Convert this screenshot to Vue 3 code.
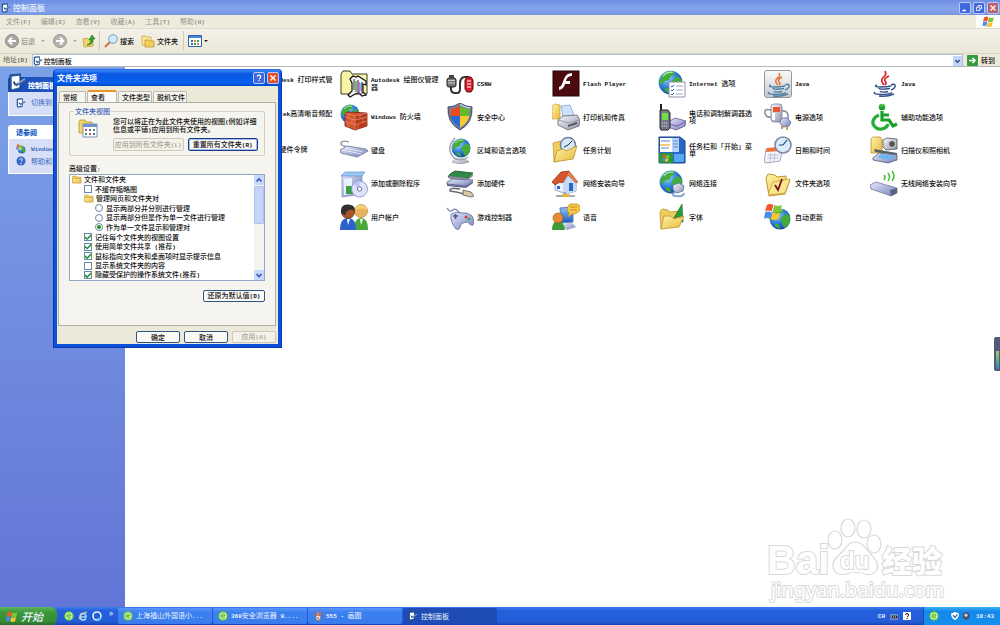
<script setup>
import { h, ref } from 'vue'

// Latin runs are set in a narrower monospace face than the Chinese text around them.
const Txt = (props) =>
  h(
    'span',
    { class: 'txt' },
    props.t.split(/([\x20-\x7e]+)/).filter(Boolean).map((s) => (/^[\x20-\x7e]/.test(s) ? h('span', { class: 'en' }, s) : s)),
  )
Txt.props = ['t']

const menus = ['文件(F)', '编辑(E)', '查看(V)', '收藏(A)', '工具(T)', '帮助(H)']

const rows = [
  [['Autodesk 打印样式管理器', 'plotter'], ['Autodesk 绘图仪管理器', 'plotter'], ['CSNW', 'csnw'], ['Flash Player', 'flash'], ['Internet 选项', 'inet'], ['Java', 'java1'], ['Java', 'java2']],
  [['Realtek高清晰音频配置', 'plotter'], ['Windows 防火墙', 'firewall'], ['安全中心', 'shield'], ['打印机和传真', 'printer'], ['电话和调制解调器选项', 'phone'], ['电源选项', 'power'], ['辅助功能选项', 'access']],
  [['USB 硬件令牌', 'plotter'], ['键盘', 'keyboard'], ['区域和语言选项', 'region'], ['任务计划', 'tasks'], ['任务栏和「开始」菜单', 'taskbar'], ['日期和时间', 'date'], ['扫描仪和照相机', 'scanner']],
  [null, ['添加或删除程序', 'programs'], ['添加硬件', 'hardware'], ['网络安装向导', 'house'], ['网络连接', 'network'], ['文件夹选项', 'folderopt'], ['无线网络安装向导', 'wireless']],
  [null, ['用户帐户', 'users'], ['游戏控制器', 'game'], ['语音', 'speech'], ['字体', 'fonts'], ['自动更新', 'update'], null],
]
const cells = rows.flat()

const tabs = ['常规', '查看', '文件类型', '脱机文件']
const tab = ref(1)

const pairMode = ref('single')
const tree = ref([
  { k: 'folder', l: 0, t: '文件和文件夹' },
  { k: 'check', l: 1, t: '不缓存缩略图', on: false },
  { k: 'folder', l: 1, t: '管理网页和文件夹对' },
  { k: 'radio', l: 2, t: '显示两部分并分别进行管理', v: 'both' },
  { k: 'radio', l: 2, t: '显示两部分但是作为单一文件进行管理', v: 'mixed' },
  { k: 'radio', l: 2, t: '作为单一文件显示和管理对', v: 'single' },
  { k: 'check', l: 1, t: '记住每个文件夹的视图设置', on: true },
  { k: 'check', l: 1, t: '使用简单文件共享 (推荐)', on: true },
  { k: 'check', l: 1, t: '鼠标指向文件夹和桌面项时显示提示信息', on: true },
  { k: 'check', l: 1, t: '显示系统文件夹的内容', on: false },
  { k: 'check', l: 1, t: '隐藏受保护的操作系统文件(推荐)', on: true },
])

const tasks = [
  { t: '上海福山外国语小...', i: 'ball' },
  { t: '360安全浏览器 9....', i: 'ball' },
  { t: '555 - 画图', i: 'paint' },
  { t: '控制面板', i: 'cpl', on: true },
]
const address = ref('控制面板')
</script>

<template>
  <div class="desktop">
    <svg class="sprite" aria-hidden="true">
      <defs>
        <radialGradient id="gSea" cx=".35" cy=".3" r=".8"><stop offset="0" stop-color="#9fd8ff" /><stop offset=".5" stop-color="#2f7fdc" /><stop offset="1" stop-color="#123a94" /></radialGradient>
        <linearGradient id="gFold" x1="0" y1="0" x2="1" y2="1"><stop offset="0" stop-color="#fff3a8" /><stop offset="1" stop-color="#e8b93c" /></linearGradient>
        <linearGradient id="gGrey" x1="0" y1="0" x2="1" y2="1"><stop offset="0" stop-color="#fbfbff" /><stop offset="1" stop-color="#8c92a8" /></linearGradient>
        <linearGradient id="gLav" x1="0" y1="0" x2="1" y2="1"><stop offset="0" stop-color="#e6eafc" /><stop offset="1" stop-color="#7480b8" /></linearGradient>
        <linearGradient id="gBlue" x1="0" y1="0" x2="0" y2="1"><stop offset="0" stop-color="#8cc4fa" /><stop offset="1" stop-color="#1858c0" /></linearGradient>
        <linearGradient id="gGreen" x1="0" y1="0" x2="0" y2="1"><stop offset="0" stop-color="#52d052" /><stop offset="1" stop-color="#0a8a1a" /></linearGradient>
        <linearGradient id="gTile" x1="0" y1="0" x2="0" y2="1"><stop offset="0" stop-color="#fafafa" /><stop offset="1" stop-color="#c3cad2" /></linearGradient>
      </defs>
      <symbol id="globe" viewBox="0 0 20 20">
        <circle cx="10" cy="10" r="9.5" fill="url(#gSea)" />
        <path d="M3 5Q7 0 12 1L13 4 10 5 9 8 5 9 3 12 1 10zM12 8l4-3 3 3v5l-4 5-2-1-1-4-2-2zM5 14l4 1 1 4-4-2z" fill="#45ac38" />
        <path d="M4 5Q7 1 12 2" stroke="#c9f2c0" fill="none" opacity=".8" />
      </symbol>
      <symbol id="fold" viewBox="0 0 20 18">
        <path d="M1 4l1-2h6l2 2h8v12H1z" fill="#efcb56" stroke="#b48a24" stroke-width=".8" />
        <path d="M1 7h17v8l-1 1H2l-1-1z" fill="url(#gFold)" stroke="#b48a24" stroke-width=".8" />
      </symbol>
      <symbol id="flag" viewBox="0 0 20 18">
        <path d="M3 2q3-2 7 0L8 9q-4-2-7 0z" fill="#f0562a" /><path d="M11 2q4 2 8 0l-2 7q-4 2-8 0z" fill="#7cc63a" />
        <path d="M1 10q3-2 7 0l-2 7q-3-2-6 0z" fill="#4a8af4" /><path d="M9 10q4 2 8 0l-2 7q-4 2-8 0z" fill="#fcc430" />
      </symbol>
      <symbol id="cpl" viewBox="0 0 20 20">
        <path d="M2 2l11-1v16l-9 2-2-3z" fill="#3366ae" stroke="#173f80" /><path d="M4 4l8-1v12l-8 2z" fill="#fff" />
        <path d="M6 9l2 4" fill="none" stroke="#234078" stroke-width="2" /><path d="M8 13l10-6" stroke="#4a6898" stroke-width="3" /><path d="M10 11l8-5" stroke="#c4d6ee" />
      </symbol>
      <symbol id="ball" viewBox="0 0 20 20">
        <circle cx="10" cy="10" r="9.5" fill="#73d13c" /><circle cx="10" cy="10" r="6.5" fill="#e8ffd6" />
        <path d="M6 10h8q0-4-4-4t-4 4q0 4 4 4 3 0 4-2" fill="none" stroke="#4ba823" stroke-width="2" />
      </symbol>
      <symbol id="paint" viewBox="0 0 20 20">
        <path d="M5 9h11l-2 10H7z" fill="#e9e0d0" stroke="#6a5440" /><path d="M7 10L3 2M10 10V1M13 10l4-8" stroke="#e45c30" stroke-width="2.4" /><path d="M10 9V3" stroke="#f6d24a" stroke-width="2" />
        <path d="M8 13l5 4" stroke="#c03050" stroke-width="2" />
      </symbol>

      <symbol id="plotter" viewBox="0 0 28 28">
        <path d="M1 24V4l2-3h7l2 3h15v20z" fill="#f8f4a6" stroke="#3a3a20" />
        <path d="M10 9l3-3 3 1 2-1 8 5v4l-3-1v8l3 3-4 1-3-3-4 1-5 3-2-2 4-4v-8z" fill="#f4f4f4" stroke="#111" stroke-width="1.2" />
        <path d="M14 9v11M18 10v14M22 12v12" stroke="#333" /><path d="M16 11v11" stroke="#3aa048" stroke-width="1.4" /><path d="M19 12v12" stroke="#b04ac0" stroke-width="1.4" /><path d="M21 13v8" stroke="#3a6ad0" />
      </symbol>
      <symbol id="csnw" viewBox="0 0 28 28">
        <path d="M5 16v3q0 4 4 4h2q3 0 3-4v-5q0-7 5-7h4" fill="none" stroke="#333" stroke-width="2" />
        <rect x="1" y="8" width="9" height="9" rx="2" fill="#777" stroke="#222" /><path d="M2 10.500h7M2 13h7" stroke="#ccc" /><path d="M3 5h5v3H3z" fill="#444" />
        <path d="M19 10l2-3h4l2 3v9l-2 3h-4l-2-3z" fill="#d8202c" stroke="#5a0a10" /><path d="M21 11h4M21 14h4M21 17h4" stroke="#fff" />
      </symbol>
      <symbol id="flash" viewBox="0 0 28 28">
        <rect x="1" y="1" width="26" height="25" fill="#4a0a10" stroke="#260408" />
        <path d="M20 6q-5 0-6 5l-1 3q-1 5-6 6v-3q2 0 3-3l2-5q2-6 8-6zM13 11h5v3h-6z" fill="#fff" />
      </symbol>
      <symbol id="inet" viewBox="0 0 28 28">
        <use href="#globe" x="0" y="0" width="25" height="25" /><path d="M11 12h16v15H11z" fill="#fff" stroke="#8892a4" />
        <path d="M13 16l1 1 2-2M13 20l1 1 2-2M13 24l1 1 2-2" fill="none" stroke="#2a60c0" /><path d="M18 16h7M18 20h7M18 24h7" stroke="#98a8c4" />
      </symbol>
      <symbol id="cup" viewBox="0 0 28 28">
        <path d="M7 15q-4 2 3 2 7 0 11-1M9 18q0 2 11 .5M10 21q1 2 8 .5M21 15q5-2 4 2-1 2-4 3M5 22q-3 2 6 2.500 9 0 11-2M9 26q8 1 15-2" fill="none" stroke-width="1.500" />
      </symbol>
      <symbol id="java1" viewBox="0 0 28 28">
        <rect x=".5" y=".5" width="27" height="27" rx="2.500" fill="url(#gTile)" stroke="#9298a0" />
        <path d="M15 3q2 3-2 5.500-3 3 1 6.500M18 7q-5 2-3 5 2 2 0 3" fill="none" stroke="#e8742a" stroke-width="1.500" /><use href="#cup" stroke="#5080a4" />
      </symbol>
      <symbol id="java2" viewBox="0 0 28 28">
        <path d="M15 1q2 4-2 6.500-3 3 1 7.500M19 6q-6 3-4 5 2 2 0 4" fill="none" stroke="#d8252c" stroke-width="1.700" /><use href="#cup" stroke="#35508c" />
      </symbol>
      <symbol id="firewall" viewBox="0 0 28 28">
        <use href="#globe" x="0" y="1" width="20" height="20" />
        <path d="M5 10l4-1 18 1v13l-12 4-10-4z" fill="#d4512c" stroke="#74200e" stroke-width=".8" /><path d="M15 13l12-3v13l-12 4z" fill="#b43a1a" />
        <path d="M5 14l10 3 12-3M5 18l10 4 12-4M5 10l10 3 12-3M9 11v4M12 16v5M8 19v5M15 13v14M20 12v4M23 15v5M18 21v5" fill="none" stroke="#eca080" stroke-width=".6" />
      </symbol>
      <symbol id="shield" viewBox="0 0 28 28">
        <path d="M14 0Q20 4 26 4q1 16-12 23Q1 20 2 4 8 4 14 0z" fill="#76809c" stroke="#404a68" /><path d="M14 3v10H4.500V6q5 0 9.500-3z" fill="#e84c22" /><path d="M14 3q5 3 9.500 3v7H14z" fill="#68b82c" />
        <path d="M4.700 13H14v11.500Q6 20 4.700 13z" fill="#2a68d8" /><path d="M14 13h9.300Q22 20 14 24.500z" fill="#fccb2c" /><path d="M14 1.500Q20 5 24.500 5" stroke="#e8ecf6" fill="none" />
      </symbol>
      <symbol id="printer" viewBox="0 0 28 28">
        <path d="M0 3l3-2 5 1v14H0z" fill="url(#gFold)" stroke="#c8a038" stroke-width=".7" /><path d="M9 3l9-1 4 10-11 2z" fill="#cde2fc" stroke="#7a9cd0" stroke-width=".7" />
        <path d="M6 17l5-4 14-1 3 5-1 6-11 4-10-5z" fill="url(#gGrey)" stroke="#60646c" stroke-width=".8" /><path d="M6 17l11 3 10-3" fill="none" stroke="#888" stroke-width=".7" /><path d="M16 22l9-3v2l-9 3z" fill="#555" />
      </symbol>
      <symbol id="phone" viewBox="0 0 28 28">
        <path d="M10 19l7-4 11 3-1 5-9 4-8-3z" fill="url(#gLav)" stroke="#5a5e90" stroke-width=".8" /><path d="M10 21l9 2 8-4" stroke="#8a50b0" fill="none" />
        <path d="M3 1v7" stroke="#222" stroke-width="2" /><path d="M2 7h8l2 3v15l-2 2H3l-1-2z" fill="#767a84" stroke="#24262c" /><path d="M4 10h6v7H4z" fill="#6fe04c" /><path d="M4 20h6M4 23h6" stroke="#ddd" stroke-dasharray="1 1" />
      </symbol>
      <symbol id="power" viewBox="0 0 28 28">
        <path d="M7 7Q0 5 1 10t6 4M18 8q7-1 6 8" fill="none" stroke="#8c90a4" stroke-width="1.600" /><rect x="7" y="1" width="11" height="18" rx="3" fill="url(#gGrey)" stroke="#7a7e90" stroke-width=".8" />
        <path d="M9 4h7v5H9z" fill="#ee5630" /><path d="M8 10h3v7H8z" fill="#fff" /><path d="M16 20q0-6 7-5l4 4-2 4-6 1z" fill="url(#gLav)" stroke="#5a6498" stroke-width=".8" /><path d="M18 23v3M23 23v4" stroke="#b88a38" stroke-width="1.600" />
      </symbol>
      <symbol id="access" viewBox="0 0 28 28">
        <circle cx="12" cy="4" r="3.300" fill="url(#gGreen)" /><path d="M12 8v9h7l4 6 4-2M12 12h7" fill="none" stroke="#18a02a" stroke-width="3.200" /><path d="M9 12q-7 3-6 9 3 6 9 5 5-1 6-5" fill="none" stroke="#27ad34" stroke-width="3.200" />
      </symbol>
      <symbol id="keyboard" viewBox="0 0 28 28">
        <path d="M9 11Q0 10 1 7t8-1" fill="none" stroke="#8c90a0" stroke-width="1.300" /><path d="M0 14l7-4 19 3 2 2-7 4-4 2L1 17z" fill="url(#gLav)" stroke="#707898" stroke-width=".8" />
        <path d="M5 12l18 4M3 14l18 4" stroke="#fff" stroke-width=".7" />
      </symbol>
      <symbol id="region" viewBox="0 0 28 28">
        <path d="M10 23h9l4 3-9 2-8-2z" fill="url(#gGrey)" stroke="#90949c" stroke-width=".7" /><path d="M9 2Q-1 12 8 22q8 4 14-1" fill="none" stroke="#a4a8b4" stroke-width="1.600" /><use href="#globe" x="5" y="2" width="20" height="20" />
      </symbol>
      <symbol id="tasks" viewBox="0 0 28 28">
        <path d="M1 7l8-2 3 3 10-1v13L2 26z" fill="#f0cc5c" stroke="#b89030" stroke-width=".7" /><circle cx="16" cy="9" r="7.500" fill="#d6e6f6" stroke="#7484a0" stroke-width="1.500" /><path d="M16 9l4-4M16 9l-4 2" stroke="#234" />
        <path d="M2 26L5 15l6-2 3 2 11-5-4 13z" fill="url(#gFold)" stroke="#b89030" stroke-width=".8" />
      </symbol>
      <symbol id="taskbar" viewBox="0 0 28 28">
        <path d="M1 1h21l5 4v22H1z" fill="#2a66c4" stroke="#174488" /><path d="M2 2h12v14H2z" fill="#fff" /><path d="M14 2h7v14h-7z" fill="#b8d4f8" /><path d="M3 5h9M3 12h8M15 5h5M15 8h5M15 11h5" stroke="#5a84c8" /><path d="M2 8h10v2H2z" fill="#f4c880" />
        <path d="M1 17h14v10H1z" fill="#2c9838" /><use href="#flag" x="4" y="18" width="8" height="8" /><path d="M16 18h10v8H16z" fill="#5aa8f4" />
      </symbol>
      <symbol id="date" viewBox="0 0 28 28">
        <path d="M2 13l17-2-3 14-13 2-3-1z" fill="#f4f6fc" stroke="#8890a8" stroke-width=".8" /><path d="M3 12l15-1-1 4-15 1z" fill="#f06c38" /><path d="M4 19h11M3 22h12M7 17l-1 9M11 17l-1 9" stroke="#a8b0c8" stroke-width=".7" />
        <circle cx="19" cy="9" r="8" fill="#dcecff" stroke="#7f8aa4" stroke-width="1.600" /><path d="M19 9l4-5M19 9h-4" stroke="#246" stroke-width="1.200" />
      </symbol>
      <symbol id="scanner" viewBox="0 0 28 28">
        <path d="M1 3l2-2h7l2 2v14H1z" fill="url(#gFold)" stroke="#b89030" stroke-width=".8" /><path d="M13 4l4-2 10 1v10l-11 1-3-3z" fill="url(#gGrey)" stroke="#54585f" stroke-width=".8" /><circle cx="22" cy="8" r="3.500" fill="#555" stroke="#ddd" />
        <path d="M4 13l23 4v2L5 16z" fill="#5c6068" /><path d="M3 22l6-5 18 2v5l-9 3-15-3z" fill="url(#gLav)" stroke="#565c74" stroke-width=".8" /><path d="M7 21l4-3 14 2-6 4z" fill="#6ab4f4" />
      </symbol>
      <symbol id="programs" viewBox="0 0 28 28">
        <path d="M2 5l20-3v22L2 27z" fill="url(#gLav)" stroke="#8894c8" stroke-width=".8" /><path d="M1 6l4-4h20l-3 4z" fill="#9cc6f4" stroke="#6a94d0" stroke-width=".7" /><path d="M4 9l8-1v16l-8 1z" fill="#e9f1ff" /><path d="M6 16h8v8H6z" fill="#3aa048" />
        <circle cx="19.500" cy="19" r="8" fill="#dfe2fa" stroke="#8288b8" stroke-width=".8" /><path d="M19.500 19l-6-5q3-3 6-3z" fill="#b6c8ff" /><circle cx="19.500" cy="19" r="2.200" fill="#fff" stroke="#6a70a8" />
      </symbol>
      <symbol id="hardware" viewBox="0 0 28 28">
        <path d="M4 4l5-3 18 2-5 5-20-1z" fill="#2f8a44" stroke="#184c24" stroke-width=".8" /><path d="M3 6l19 2 5-4v2l-5 4L3 9z" fill="#8a8a9c" />
        <path d="M1 12l6-3 20 1-7 6-19-2z" fill="url(#gLav)" stroke="#5c6288" stroke-width=".8" /><path d="M1 14l19 2 7-5v2l-7 5-19-2z" fill="#6a6494" />
        <path d="M14 19Q3 17 4 21q8 1 14 3" fill="none" stroke="#6c6c78" stroke-width="1.600" /><path d="M17 20l8 2 3 4-3 1-8-2z" fill="#d9c9a4" stroke="#555" stroke-width=".8" />
      </symbol>
      <symbol id="house" viewBox="0 0 28 28">
        <path d="M3 11l7-7 8-1 6 9v9l-9 3-12-4z" fill="#eaf2fe" stroke="#8696b4" stroke-width=".8" /><path d="M11 12l5-9 8 9v9l-9 3-4-2z" fill="#c4dcf8" /><path d="M0 12L9 2l8-1-7 12-2-1-5 3z" fill="#d8542c" stroke="#8a2a14" stroke-width=".7" /><path d="M17 1l9 11-2 1-8-8-5 8-1-1z" fill="#ee7a48" stroke="#a83c1c" stroke-width=".5" />
        <path d="M5 16h3v3H5zM17 13h4v8h-4z" fill="#2a68c8" /><path d="M4 26h19M13 22v4" stroke="#8a8e94" stroke-width="1.600" /><path d="M10 24h7v3h-7z" fill="#e0b83c" />
      </symbol>
      <symbol id="network" viewBox="0 0 28 28">
        <use href="#globe" x="1" y="0" width="24" height="24" /><path d="M15 15l6-2 5 3-1 5-6 2-4-3z" fill="url(#gGrey)" stroke="#56749c" stroke-width=".8" /><path d="M18 21q-6 5 0 5 8 1 8-3" fill="none" stroke="#85a6d0" stroke-width="2" />
      </symbol>
      <symbol id="folderopt" viewBox="0 0 28 28">
        <path d="M2 8l2-4 7 1 2 2 9-1v4h4l-5 14-16 2z" fill="url(#gFold)" stroke="#bc9634" /><path d="M4 25l5-13 17-3-5 14z" fill="#fbe68e" stroke="#c8a23e" stroke-width=".8" /><path d="M11 15l3 5 4-11" fill="none" stroke="#741414" stroke-width="1.800" />
      </symbol>
      <symbol id="wireless" viewBox="0 0 28 28">
        <path d="M0 15l6-3 21 6v5l-6 3L1 19z" fill="url(#gLav)" stroke="#777d9c" stroke-width=".8" /><path d="M20 20l7-2v5l-6 3z" fill="#5c6284" /><path d="M14 5q2 2 0 5M18 3q3 4 0 8M22 1q4 5 0 10" fill="none" stroke="#4cc03c" stroke-width="1.600" />
      </symbol>
      <symbol id="users" viewBox="0 0 28 28">
        <path d="M14 27q0-12 7-12t7 12z" fill="#48a838" /><circle cx="21" cy="8" r="6.500" fill="#e8b45c" stroke="#a87420" stroke-width=".6" /><path d="M15 7q1-6 7-5 5 1 5 5-7-3-12 0z" fill="#f4d070" />
        <path d="M0 27q0-12 8-12t8 12z" fill="#2c62cc" /><circle cx="8" cy="9" r="6.500" fill="#a85428" stroke="#442010" stroke-width=".6" /><path d="M1 10Q0 1 8 1.500q7 0 7 6-8-3-10 5z" fill="#35302e" /><path d="M7 16l1 6 2-6M20 16l1 6 2-6" fill="#fff" />
      </symbol>
      <symbol id="game" viewBox="0 0 28 28">
        <path d="M14 11Q10 4 7 7T1 5" fill="none" stroke="#8088a8" stroke-width="1.400" /><path d="M5 11q6-3 11-1 6-1 10 3 3 6 1 9-3 1-5-3-4 0-7 2-1 7-5 5-6-7-5-15z" fill="url(#gLav)" stroke="#5e68a8" stroke-width=".8" /><path d="M7 13h5M9.500 11v5" stroke="#4a5494" stroke-width="1.600" /><circle cx="20" cy="14" r="1.500" fill="#d23c3c" /><circle cx="23" cy="16" r="1.300" fill="#2c9c4c" />
      </symbol>
      <symbol id="speech" viewBox="0 0 28 28">
        <path d="M8 5l13-1v15L9 20z" fill="url(#gBlue)" stroke="#6a7ca8" /><path d="M12 20h8l4 4-9 3-4-3z" fill="url(#gLav)" /><path d="M18 1h7q4 1 3 6-2 4-8 4l-4 3 1-4q-4-5 1-9z" fill="#fbc948" stroke="#c48a1c" stroke-width=".8" /><path d="M18 4h7M18 7h7" stroke="#b4801c" stroke-width=".8" />
        <path d="M0 27q0-9 6-9t7 9z" fill="#3f9c34" /><circle cx="6" cy="15" r="5" fill="#e88c34" stroke="#9a4c14" stroke-width=".6" />
      </symbol>
      <symbol id="fonts" viewBox="0 0 28 28">
        <path d="M2 9l2-3 6 1 2 2 10-1v14L3 26z" fill="#f0cd5a" stroke="#bc9634" stroke-width=".8" /><path d="M14 18L24 1l1 18h-4v-5h-3l-2 5z" fill="#2c9c38" stroke="#146020" stroke-width=".6" /><path d="M3 26l3-13 7 0 3 3 10-3-5 11z" fill="url(#gFold)" stroke="#bc9634" stroke-width=".8" />
      </symbol>
      <symbol id="update" viewBox="0 0 28 28">
        <use href="#globe" x="5" y="5" width="22" height="22" /><use href="#flag" x="0" y="0" width="19" height="17" />
      </symbol>
    </svg>

    <header class="titlebar">
      <svg class="i10"><use href="#cpl" /></svg>
      <h1>控制面板</h1>
      <div class="winbtns">
        <button aria-label="最小化"><svg viewBox="0 0 12 12"><path d="M3 9h4" stroke="#fff" stroke-width="2" /></svg></button>
        <button aria-label="还原"><svg viewBox="0 0 12 12"><path d="M5 5V3h4v4H7M3 5h4v4H3z" fill="none" stroke="#fff" /></svg></button>
        <button class="close" aria-label="关闭"><svg viewBox="0 0 12 12"><path d="M3 3l6 6M9 3l-6 6" stroke="#fff" stroke-width="1.500" /></svg></button>
      </div>
    </header>

    <nav class="menubar">
      <button v-for="m in menus" :key="m"><Txt :t="m" /></button>
      <span class="brand"><svg viewBox="0 0 20 18"><use href="#flag" /></svg></span>
    </nav>

    <div class="toolbar">
      <button class="dim">
        <svg class="i14" viewBox="0 0 14 14"><circle cx="7" cy="7" r="6.500" fill="#a6a6a2" stroke="#8c8c88" /><path d="M11 7H4M7 3.500L3.500 7 7 10.500" fill="none" stroke="#fff" stroke-width="1.800" /></svg>后退
      </button>
      <i class="caret pale"></i>
      <button class="dim fwd" aria-label="前进">
        <svg class="i14" viewBox="0 0 14 14"><circle cx="7" cy="7" r="6.500" fill="#b2b2ae" stroke="#969692" /><path d="M3 7h7M7 3.500L10.500 7 7 10.500" fill="none" stroke="#fff" stroke-width="1.800" /></svg>
      </button>
      <i class="caret pale"></i>
      <button class="up" aria-label="向上">
        <svg class="i14" viewBox="0 0 14 14"><path d="M1 5l4-1 1 1h5v7l-9 1z" fill="#f2d466" stroke="#b99a3a" stroke-width=".7" /><path d="M5 11q4-1 4-5H7l3-5 3 4h-2q0 6-6 6z" fill="#2fa52f" stroke="#137a1c" stroke-width=".6" /></svg>
      </button>
      <i class="sep"></i>
      <button>
        <svg class="i14" viewBox="0 0 14 14"><path d="M1 13l5-5" stroke="#c87848" stroke-width="2.200" /><circle cx="9" cy="5" r="4.300" fill="#d0ecfc" stroke="#6c9cc8" /></svg>搜索
      </button>
      <button class="folders">
        <svg class="i14" viewBox="0 0 14 14"><path d="M1 2h4l1 1h4v8H1z" fill="#fbe996" stroke="#c0a040" stroke-width=".7" /><path d="M4 6h4l1 1h4v6H4z" fill="#f4cf58" stroke="#b48e2c" stroke-width=".7" /></svg>文件夹
      </button>
      <i class="sep wide"></i>
      <button class="view" aria-label="查看">
        <svg class="i14" viewBox="0 0 14 14"><path d="M.5 1.500h13v11H.5z" fill="#fff" stroke="#2c60b4" /><path d="M1 2h12v2H1z" fill="#4a84d8" /><path d="M3 6h2v2H3zM3 9h2v2H3z" fill="#3c64b4" /><path d="M6 6h2v2H6zM9 9h2v2H9z" fill="#d88c38" /><path d="M9 6h2v2H9zM6 9h2v2H6z" fill="#3c9c54" /></svg>
      </button>
      <i class="caret"></i>
    </div>

    <form class="addressbar" @submit.prevent>
      <label for="addr"><Txt t="地址(D)" /></label>
      <div class="field">
        <svg class="i10"><use href="#cpl" /></svg>
        <input id="addr" v-model="address" type="text" />
        <button type="button" class="drop" aria-label="展开地址"><svg viewBox="0 0 10 10"><path d="M2.500 4L5 6.500 7.500 4" fill="none" stroke="#2c4c8c" stroke-width="1.500" /></svg></button>
      </div>
      <button class="go"><svg viewBox="0 0 11 11"><rect width="11" height="11" rx="1" fill="#349a3c" /><path d="M2 5.500h6M5.500 3L8 5.500 5.500 8" fill="none" stroke="#fff" stroke-width="1.500" /></svg>转到</button>
    </form>

    <main class="content">
      <aside class="side">
        <section class="panel">
          <h2 class="dark"><svg><use href="#cpl" /></svg>控制面板</h2>
          <ul>
            <li class="tall"><svg class="i10"><use href="#cpl" /></svg><a href="#">切换到分类视图</a></li>
          </ul>
        </section>
        <section class="panel">
          <h2>请参阅</h2>
          <ul>
            <li><svg class="i10"><use href="#update" /></svg><a href="#"><Txt t="Windows Update" /></a></li>
            <li><svg class="i10" viewBox="0 0 10 10"><circle cx="5" cy="5" r="4.500" fill="#3568c4" /><path d="M3.500 3.500q2-2 3 0 0 1-1.500 2" fill="none" stroke="#fff" /><circle cx="5" cy="7.500" r=".7" fill="#fff" /></svg><a href="#">帮助和支持</a></li>
          </ul>
        </section>
      </aside>
      <div class="icons">
        <template v-for="(c, i) in cells" :key="i">
          <button v-if="c" class="item"><svg><use :href="'#' + c[1]" /></svg><span class="cap"><Txt :t="c[0]" /></span></button>
          <span v-else></span>
        </template>
      </div>
      <span class="gauge"><i></i></span>
      <svg class="mark" viewBox="0 0 190 90" role="img" aria-label="Baidu 经验 jingyan.baidu.com">
        <g fill="#fff" stroke="#d9d9d9" stroke-width="1.200">
          <text class="m-bai" x="2" y="57">Bai</text>
          <ellipse cx="70" cy="23" rx="7" ry="9" /><ellipse cx="83" cy="11" rx="7" ry="9" /><ellipse cx="99" cy="12" rx="7" ry="9" /><ellipse cx="109" cy="27" rx="7" ry="9" />
          <path d="M90 25q7 0 12 8l8 9q5 7 1 12-4 5-11 3-9-3-19 0-8 2-12-4-3-6 2-12l8-8q5-8 11-8z" />
          <text class="m-du" x="75" y="52">du</text>
          <text class="m-cn" x="117" y="55">经验</text>
          <text class="m-url" x="6" y="80">jingyan.baidu.com</text>
        </g>
      </svg>
    </main>

    <footer class="taskbar">
      <button class="start"><svg viewBox="0 0 20 18"><use href="#flag" /></svg>开始</button>
      <div class="quick">
        <svg class="i10"><use href="#ball" /></svg>
        <svg class="i10" viewBox="0 0 10 10"><path d="M2 6h6q0-3.500-3-3.500T2 6q0 3 3 3 2 0 3-1.500" fill="none" stroke="#a6dcff" stroke-width="1.600" /><path d="M1 8Q4 1 9 1" stroke="#f6d67c" fill="none" /></svg>
        <svg class="i10" viewBox="0 0 10 10"><circle cx="5" cy="5" r="4" fill="none" stroke="#e4f4ff" stroke-width="1.600" /><path d="M5 7h4v2H5z" fill="#5cc0ff" /></svg>
        <span>»</span>
      </div>
      <div class="tasks">
        <button v-for="k in tasks" :key="k.t" :class="{ on: k.on }"><svg class="i10"><use :href="'#' + k.i" /></svg><Txt :t="k.t" /></button>
      </div>
      <div class="lang">
        <Txt t="CH" />
        <svg viewBox="0 0 8 8"><path d="M0 3h8v4H0z" fill="#202838" stroke="#c8d4ec" stroke-width=".8" /><path d="M1 5h6" stroke="#fff" stroke-dasharray="1 1" /></svg>
        <svg viewBox="0 0 8 8"><path d="M0 0h8v8H0z" fill="#fff" /><path d="M2.500 3q0-1.500 1.500-1.500T5.500 3 4 5M4 6v1" stroke="#111" fill="none" /></svg>
      </div>
      <div class="tray">
        <svg class="i10"><use href="#ball" /></svg>
        <svg class="i8 gap" viewBox="0 0 10 10"><path d="M5 0l5 2q0 6-5 8-5-2-5-8z" fill="#fff" /><path d="M2.500 4L5 7l3-4" fill="none" stroke="#2060c0" stroke-width="1.500" /></svg>
        <svg class="i8" viewBox="0 0 10 10"><path d="M1 2l5-2 4 3-1 5-4 2-4-3z" fill="#47506a" /><circle cx="5" cy="4" r="2" fill="#c8d4e4" /></svg>
        <time><Txt t="18:43" /></time>
      </div>
    </footer>

    <section class="dialog" role="dialog" aria-labelledby="dlgTitle">
      <header>
        <h2 id="dlgTitle">文件夹选项</h2>
        <button aria-label="帮助"><svg viewBox="0 0 12 12"><path d="M4 4.500Q4 2.500 6 2.500T8 4.500 6 7M6 8.500v1.500" fill="none" stroke="#fff" stroke-width="1.500" /></svg></button>
        <button class="close" aria-label="关闭"><svg viewBox="0 0 12 12"><path d="M3 3l6 6M9 3l-6 6" stroke="#fff" stroke-width="1.600" /></svg></button>
      </header>
      <div class="body">
        <div class="tabs" role="tablist">
          <button v-for="(t, i) in tabs" :key="t" role="tab" :aria-selected="tab === i" :class="{ on: tab === i }" @click="tab = i">{{ t }}</button>
        </div>
        <div class="sheet">
          <fieldset>
            <legend>文件夹视图</legend>
            <svg class="fview" viewBox="0 0 20 20"><path d="M1 3l1-2h5l1 2h6v11H1z" fill="#f4d468" stroke="#b8942e" stroke-width=".8" /><path d="M5 5h14v13H5z" fill="#fff" stroke="#7a90b8" /><path d="M5 5h14v3H5z" fill="#6e94d4" /><path d="M7 10h2v2H7zM11 14h2v2h-2z" fill="#d84c3c" /><path d="M11 10h2v2h-2zM15 14h2v2h-2z" fill="#3c70c8" /><path d="M15 10h2v2h-2zM7 14h2v2H7z" fill="#3ca04c" /></svg>
            <div class="fbody">
              <p><Txt t="您可以将正在为此文件夹使用的视图(例如详细" /><br /><Txt t="信息或平铺)应用到所有文件夹。" /></p>
              <div class="pair">
                <button class="btn" disabled><Txt t="应用到所有文件夹(L)" /></button>
                <button class="btn focus"><Txt t="重置所有文件夹(R)" /></button>
              </div>
            </div>
          </fieldset>
          <p class="adv"><Txt t="高级设置:" /></p>
          <div class="list">
            <div class="tree">
              <component :is="n.k === 'folder' ? 'div' : 'label'" v-for="n in tree" :key="n.t" :class="['node', 'l' + n.l]">
                <svg v-if="n.k === 'folder'" viewBox="0 0 20 18"><use href="#fold" /></svg>
                <input v-else-if="n.k === 'check'" v-model="n.on" type="checkbox" />
                <input v-else v-model="pairMode" type="radio" name="pair" :value="n.v" />
                <Txt :t="n.t" />
              </component>
            </div>
            <div class="scroll">
              <button aria-label="向上滚动"><svg viewBox="0 0 10 10"><path d="M2.500 6.500L5 4l2.500 2.500" fill="none" stroke="#3c5aa0" stroke-width="1.600" /></svg></button>
              <i></i>
              <button class="dn" aria-label="向下滚动"><svg viewBox="0 0 10 10"><path d="M2.500 4L5 6.500 7.500 4" fill="none" stroke="#3c5aa0" stroke-width="1.600" /></svg></button>
            </div>
          </div>
          <button class="btn restore"><Txt t="还原为默认值(D)" /></button>
        </div>
        <div class="actions">
          <button class="btn">确定</button>
          <button class="btn">取消</button>
          <button class="btn" disabled><Txt t="应用(A)" /></button>
        </div>
      </div>
    </section>
  </div>
</template>

<style>
body { margin: 0; }
.en { font-family: "Liberation Mono", monospace; font-size: 6px; line-height: 6px; font-weight: 700; white-space: pre-wrap; }
</style>

<style scoped>
* { box-sizing: border-box; }
.desktop {
  position: relative; display: flex; flex-direction: column; min-height: 100vh; overflow: hidden;
  font: 7px/7px "Noto Sans CJK SC", sans-serif; color: #111; background: #fff; text-spacing-trim: space-all;
}
.sprite { position: absolute; width: 0; height: 0; }
button { font: inherit; color: inherit; background: none; border: 0; padding: 0; margin: 0; display: flex; align-items: center; white-space: nowrap; }
h1, h2, p, ul { margin: 0; padding: 0; }
svg { display: block; flex: none; }
.i10 { width: 10px; height: 10px; }
.i8 { width: 8px; height: 8px; }
.i14 { width: 14px; height: 14px; }

.titlebar { height: 15px; display: flex; align-items: center; gap: 2px; padding: 0 1px; color: #e9effc; background: linear-gradient(#6d8fe4, #86a4ec 60%, #7695e0); }
.titlebar h1 { font-size: 8px; line-height: 10px; font-weight: 500; flex: 1; }
.winbtns { display: flex; gap: 2px; }
.winbtns button, .dialog header button { width: 12px; height: 12px; border: 1px solid #b9caf6; border-radius: 2px; background: #4068dc; }
.winbtns .close { background: #b8606c; }
.winbtns svg, .dialog header svg { width: 10px; height: 10px; }

.menubar { height: 14px; display: flex; align-items: stretch; background: #eeebdd; color: #98968c; border-bottom: 1px solid #dedbcd; padding-left: 1px; }
.menubar button { padding: 0 5px; }
.brand { margin-left: auto; width: 24px; background: #fff; display: flex; align-items: center; justify-content: center; }
.brand svg { width: 13px; height: 11px; }

.toolbar { height: 25px; display: flex; align-items: center; padding: 0 5px; background: linear-gradient(#f3f1e8, #ebe8d8); border-bottom: 1px solid #d9d5c5; }
.toolbar button { gap: 2px; font-weight: 500; }
.toolbar .dim { color: #9b998f; }
.caret { width: 4px; height: 2px; background: #222; clip-path: polygon(0 0, 100% 0, 50% 100%); margin-left: 2px; }
.caret.pale { background: #aaa; margin-left: 6px; }
.fwd { margin-left: 8px; }
.up { margin-left: 5px; }
.sep { width: 1px; height: 20px; background: #cfccbe; margin: 0 4px 0 3px; }
.sep.wide { margin-left: 5px; }
.folders { margin-left: 7px; }

.addressbar { height: 13px; display: flex; align-items: center; padding: 0 5px 0 3px; gap: 4px; background: #ece9d9; color: #66645c; border-bottom: 1px solid #b4b8bc; }
.addressbar label { white-space: nowrap; }
.field { flex: 1; height: 12px; display: flex; align-items: center; gap: 1px; background: #fff; border: 1px solid #b2c2da; border-bottom: 0; }
.field input { flex: 1; min-width: 0; border: 0; padding: 0; outline: 0; background: none; font: inherit; font-weight: 500; color: #111; height: 10px; }
.drop { width: 9px; height: 10px; background: #c4d5fb; }
.drop svg { width: 9px; height: 10px; }
.go { gap: 3px; color: #111; font-weight: 500; }
.go svg { width: 11px; height: 11px; }

.content { position: relative; flex: 1; display: flex; align-items: stretch; }
.side { width: 125px; flex: none; padding: 10px 8px; background: linear-gradient(#7ba1e7, #6375d6); }
.panel { margin-bottom: 9px; }
.panel h2 { height: 14px; display: flex; align-items: center; padding-left: 8px; font-size: 7px; line-height: 14px; font-weight: 900; color: #215dc6; background: linear-gradient(90deg, #fff 40%, #c7d4f7); border-radius: 3px 3px 0 0; }
.panel h2.dark { height: 15px; color: #fff; padding-left: 0; gap: 1px; background: linear-gradient(90deg, #1a4cb8, #2e64ce); }
.panel h2 svg { width: 19px; height: 19px; margin-top: -4px; }
.panel ul { list-style: none; background: #d6dff7; border: 1px solid #fff; border-top: 0; padding: 4px 7px 6px; }
.panel li { display: flex; align-items: center; gap: 5px; height: 12px; }
.panel li.tall { height: 13px; }
.panel a { color: #3a68c0; text-decoration: none; white-space: nowrap; }

.icons { flex: 1; display: grid; grid-template-columns: repeat(7, 106px); grid-template-rows: repeat(5, 1fr); height: 167px; padding-left: 109px; margin-right: -40px; }
.item { gap: 3px; text-align: left; white-space: normal; }
.item svg { width: 28px; height: 28px; }
.cap { width: 69px; font-weight: 500; word-break: break-all; }
.gauge { position: absolute; right: 0; top: 270px; width: 6px; height: 34px; padding: 14px 1px 2px 2px; background: #525c78; border-radius: 2px 0 0 2px; display: flex; }
.gauge i { flex: 1; background: linear-gradient(#b8c070, #58a890 60%, #3c78b4); }
.mark { position: absolute; right: 45px; bottom: 0; width: 190px; height: 90px; }
.mark text { paint-order: stroke; stroke-width: 2px; }
.m-bai { font: bold 40px "Liberation Sans", sans-serif; }
.m-du { font: bold 24px "Liberation Sans", sans-serif; }
.m-cn { font: 900 30px "Noto Sans CJK SC", sans-serif; }
.m-url { font: 20px "Noto Sans", sans-serif; }

.taskbar { height: 18px; display: flex; align-items: stretch; color: #eef4ff; background: linear-gradient(#3c80ee, #2560dc 20%, #245cd8 80%, #1c48b0); }
.start { width: 57px; gap: 3px; padding-left: 6px; font-size: 11px; font-weight: 500; font-style: italic; background: linear-gradient(#5cb45c, #3a983a 30%, #358c35 80%, #286c28); border-radius: 0 6px 6px 0; }
.start svg { width: 12px; height: 11px; }
.quick { display: flex; align-items: center; gap: 4px; width: 61px; padding-left: 7px; }
.quick span { font: 8px/12px "Noto Sans", sans-serif; align-self: flex-start; margin-left: 3px; }
.tasks { flex: 1; display: flex; gap: 1px; padding: 1px 0; }
.tasks button { flex: 0 1 94px; gap: 3px; padding-left: 5px; border-radius: 2px; background: linear-gradient(#5a98f8, #3c80f0 25%, #3a7cec); }
.tasks button.on { background: #1e4cb4; }
.lang { display: flex; align-items: center; gap: 5px; padding-right: 12px; }
.lang svg { width: 8px; height: 8px; }
.tray { display: flex; align-items: center; gap: 3px; padding: 0 6px 0 5px; background: linear-gradient(#3cb0f8, #1488e8 25%, #1490ec); border-left: 1px solid #0c50b0; }
.tray .gap { margin-left: 9px; }
.tray time { margin-left: 3px; }

.dialog { position: absolute; left: 53px; top: 69px; width: 229px; background: #0f50d8; border-radius: 4px 4px 0 0; padding: 0 3px 3px; border: 1px solid #0838b0; border-top-color: #2a68e0; }
.dialog header { height: 16px; display: flex; align-items: center; gap: 2px; margin: 0 -3px; padding: 0 2px 0 3px; color: #fff; background: linear-gradient(#3c88f8, #0a58e4 25%, #0860f0 80%, #0048c8); border-radius: 3px 3px 0 0; }
.dialog h2 { flex: 1; font-size: 8px; line-height: 10px; font-weight: 700; }
.dialog header .close { background: #e0502c; }
.body { background: #ece9d8; padding: 4px 2px 1px 1px; }
.tabs { display: flex; align-items: flex-end; gap: 1px; padding-left: 1px; height: 12px; }
.tabs button { height: 11px; padding: 0 5px 0 3px; font-weight: 500; background: #f6f5ee; border: 1px solid #b8bcb8; border-bottom: 0; border-radius: 2px 2px 0 0; }
.tabs button:nth-child(1) { width: 27px; }
.tabs button:nth-child(n + 3) { padding-right: 1px; width: 34px; }
.tabs button.on { width: 30px; height: 12px; border-top: 2px solid #e8952c; background: #fbfaf6; }
.sheet { background: #f5f4ee; border: 1px solid #b0b0a4; padding: 4px 10px 23px; display: flex; flex-direction: column; }
fieldset { margin: 0; min-width: 0; border: 1px solid #d2d0c0; border-radius: 2px; padding: 3px 6px 4px 8px; display: flex; align-items: flex-start; gap: 15px; }
legend { padding: 0 1px; margin-left: -4px; line-height: 8px; color: #3a62b4; font-weight: 500; }
.fview { width: 20px; height: 20px; margin-top: 1px; }
.fbody { flex: 1; min-width: 0; white-space: nowrap; }
.fbody p { font-weight: 500; }
.pair { display: flex; gap: 4px; margin-top: 4px; }
.pair .btn { flex: 1; height: 13px; }
.btn { height: 12px; justify-content: center; font-weight: 500; background: #fbfaf7; border: 1px solid #2e5684; border-radius: 2px; }
.btn:disabled { color: #a8a698; border-color: #ccc9ba; background: #f4f2e8; }
.btn.focus { border-color: #1a3c80; box-shadow: inset 0 0 0 1px #a0bcf0; }
.adv { margin-top: 8px; height: 10px; line-height: 8px; font-weight: 500; }
.list { height: 107px; display: flex; border: 1px solid #8fa8c4; background: #fff; }
.tree { flex: 1; display: grid; grid-auto-rows: 1fr; }
.node { display: flex; align-items: center; gap: 3px; white-space: nowrap; min-height: 0; font-weight: 500; }
.l0 { padding-left: 2px; }
.l1 { padding-left: 14px; }
.l2 { padding-left: 25px; }
.node svg { width: 10px; height: 9px; margin-right: -1px; }
.node input { appearance: none; margin: 0; width: 8px; height: 8px; flex: none; border: 1px solid #6a88a8; background: #fff; display: grid; place-items: center; }
.node input[type="radio"] { border-radius: 50%; }
.node input[type="checkbox"]:checked::before { content: ""; width: 6px; height: 6px; background: #1c9422; clip-path: polygon(0 35%, 38% 65%, 100% 0, 100% 35%, 38% 100%, 0 70%); }
.node input[type="radio"]:checked::before { content: ""; width: 4px; height: 4px; border-radius: 50%; background: #1c9422; }
.scroll { width: 10px; display: flex; flex-direction: column; background: #f4f4f0; }
.scroll button { height: 10px; background: #c8d8fc; border-radius: 1px; }
.scroll svg { width: 10px; height: 10px; }
.scroll i { height: 38px; background: #c4d4fb; border: 1px solid #aebff0; border-radius: 1px; margin-top: 1px; }
.scroll .dn { margin-top: auto; }
.restore { align-self: flex-end; width: 62px; margin-top: 9px; }
.actions { display: flex; justify-content: flex-end; gap: 4px; padding-top: 5px; }
.actions .btn { width: 44px; }
</style>
